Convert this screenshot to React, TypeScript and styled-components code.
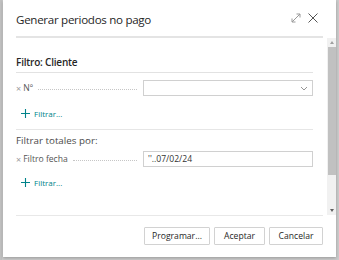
import styled, { createGlobalStyle } from "styled-components";

const GlobalStyle = createGlobalStyle`
  html, body {
    margin: 0;
    padding: 0;
    background: #c4c4c4;
    font-family: "Open Sans", "Noto Sans", sans-serif;
  }
  * { box-sizing: border-box; }
`;

const Backdrop = styled.div`
  width: 339px;
  height: 260px;
  padding: 0 3px;
  background: linear-gradient(90deg, #cbcbcb 0, #b9b9b9 1px, #cbcbcb 2px, #cbcbcb 100%);
`;

const Dialog = styled.div`
  width: 333px;
  height: 257px;
  background: #fff;
  display: flex;
  flex-direction: column;
  box-shadow: 0 1px 3px rgba(0, 0, 0, 0.25);
`;

const Header = styled.div`
  margin: 0 13px;
  padding-right: 4px;
  height: 38px;
  display: flex;
  align-items: center;
  border-bottom: 2px solid #e4e4e4;
`;

const Title = styled.h1`
  flex: 1;
  margin: 0;
  padding-top: 2px;
  font-size: 11.6px;
  letter-spacing: -0.3px;
  font-weight: 400;
  color: #262626;
`;

const IconButton = styled.span`
  display: flex;
  width: 12px;
  height: 12px;
  margin-left: 5px;
`;

const Body = styled.div`
  flex: 1;
  display: flex;
  min-height: 0;
`;

const Content = styled.div`
  flex: 1;
  padding: 17px 14px 0 13px;
  display: flex;
  flex-direction: column;
`;

const SectionTitle = styled.h2`
  margin: 0;
  font-size: 10px;
  letter-spacing: -0.2px;
  font-weight: 600;
  color: #262626;
  line-height: 14px;
  padding-bottom: 3px;
  border-bottom: 1px solid #e2e2e2;
`;

const GroupTitle = styled.div`
  font-size: 9.8px;
  color: #4a4a4a;
  line-height: 14px;
  margin-top: 4px;
`;

const FieldRow = styled.div<{ $top: number }>`
  display: flex;
  align-items: center;
  height: 16px;
  margin-top: ${(p) => p.$top}px;
`;

const FieldLabel = styled.span`
  font-size: 8.6px;
  color: #555;
  white-space: nowrap;
  display: flex;
  align-items: center;
  gap: 2px;
`;

const Remove = styled.span`
  color: #9a9a9a;
  font-size: 9px;
`;

const Leader = styled.span`
  flex: 1;
  margin: 2px 6px 0 5px;
  border-bottom: 1px dotted #c6c6c6;
  height: 1px;
`;

const InputBox = styled.div`
  width: 170px;
  height: 16px;
  border: 1px solid #d0d0d0;
  display: flex;
  align-items: center;
  padding: 0 4px;
  font-size: 8.6px;
  color: #333;
`;

const InputValue = styled.span`
  flex: 1;
`;

const AddFilter = styled.div<{ $top: number }>`
  display: flex;
  align-items: center;
  gap: 4px;
  margin: ${(p) => p.$top}px 0 0 5px;
  height: 12px;
  color: #00838a;
  font-size: 8px;
`;

const Separator = styled.div<{ $top: number }>`
  margin-top: ${(p) => p.$top}px;
  border-top: 1px solid #e6e6e6;
`;

const Scrollbar = styled.div`
  width: 9px;
  background: #f1f1f1;
  display: flex;
  flex-direction: column;
  align-items: center;
`;

const Arrow = styled.span<{ $down?: boolean }>`
  width: 0;
  height: 0;
  border-left: 2.5px solid transparent;
  border-right: 2.5px solid transparent;
  ${(p) =>
    p.$down
      ? "border-top: 3px solid #606060; margin-top: auto; margin-bottom: 3px;"
      : "border-bottom: 3px solid #a0a0a0; margin-top: 3px;"}
`;

const Thumb = styled.div`
  width: 8px;
  height: 128px;
  margin-top: 3px;
  background: #c1c1c1;
`;

const Footer = styled.div`
  margin: 0 13px;
  padding: 11px 0 12px;
  border-top: 1px solid #e8e8e8;
  display: flex;
  justify-content: flex-end;
  gap: 4px;
`;

const Button = styled.button<{ $w: number }>`
  width: ${(p) => p.$w}px;
  height: 18px;
  padding: 0;
  background: #fff;
  border: 1px solid #d2d2d2;
  border-radius: 1px;
  font-family: "Open Sans", "Noto Sans", sans-serif;
  font-size: 8.6px;
  color: #262626;
`;

const ExpandIcon = () => (
  <svg width="12" height="12" viewBox="0 0 12 12" fill="none" stroke="#9a9a9a" strokeWidth="1">
    <path d="M2 10 L10 2 M6.5 2 H10 V5.5 M2 6.5 V10 H5.5" />
  </svg>
);

const CloseIcon = () => (
  <svg width="12" height="12" viewBox="0 0 12 12" fill="none" stroke="#555" strokeWidth="1">
    <path d="M1.5 1.5 L10.5 10.5 M10.5 1.5 L1.5 10.5" />
  </svg>
);

const Chevron = () => (
  <svg width="8" height="5" viewBox="0 0 8 5" fill="none" stroke="#8a8a8a" strokeWidth="0.9">
    <path d="M1 1 L4 4 L7 1" />
  </svg>
);

const Plus = () => (
  <svg width="9" height="9" viewBox="0 0 9 9" fill="none" stroke="#00838a" strokeWidth="1.1">
    <path d="M4.5 0 V9 M0 4.5 H9" />
  </svg>
);

export default function App() {
  return (
    <>
      <GlobalStyle />
      <Backdrop>
        <Dialog>
          <Header>
            <Title>Generar periodos no pago</Title>
            <IconButton>
              <ExpandIcon />
            </IconButton>
            <IconButton>
              <CloseIcon />
            </IconButton>
          </Header>
          <Body>
            <Content>
              <SectionTitle>Filtro: Cliente</SectionTitle>
              <FieldRow $top={7}>
                <FieldLabel>
                  <Remove>×</Remove> Nº
                </FieldLabel>
                <Leader />
                <InputBox>
                  <InputValue />
                  <Chevron />
                </InputBox>
              </FieldRow>
              <AddFilter $top={11}>
                <Plus /> Filtrar...
              </AddFilter>
              <Separator $top={10} />
              <GroupTitle>Filtrar totales por:</GroupTitle>
              <FieldRow $top={3}>
                <FieldLabel>
                  <Remove>×</Remove> Filtro fecha
                </FieldLabel>
                <Leader />
                <InputBox>
                  <InputValue>''..07/02/24</InputValue>
                </InputBox>
              </FieldRow>
              <AddFilter $top={9}>
                <Plus /> Filtrar...
              </AddFilter>
            </Content>
            <Scrollbar>
              <Arrow />
              <Thumb />
              <Arrow $down />
            </Scrollbar>
          </Body>
          <Footer>
            <Button $w={66}>Programar...</Button>
            <Button $w={51}>Aceptar</Button>
            <Button $w={54}>Cancelar</Button>
          </Footer>
        </Dialog>
      </Backdrop>
    </>
  );
}
